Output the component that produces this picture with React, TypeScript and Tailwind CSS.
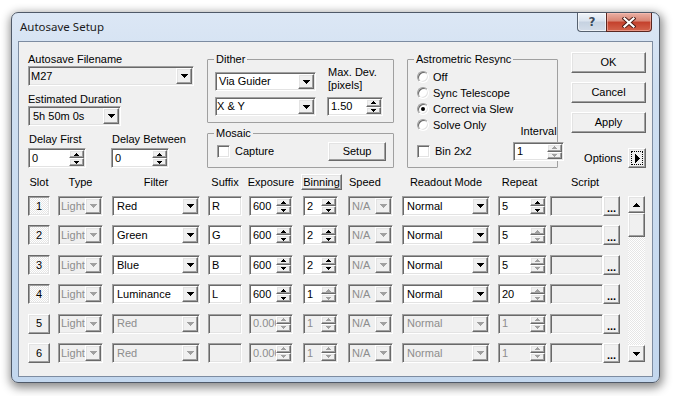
import React from 'react';

// classic win32 bevels
const SUNKEN =
  'border border-t-[#a0a0a0] border-l-[#a0a0a0] border-b-white border-r-white shadow-[inset_1px_1px_0_#696969,inset_-1px_-1px_0_#e3e3e3] p-[1px]';
const RAISED =
  'border border-t-white border-l-white border-b-[#696969] border-r-[#696969] shadow-[inset_-1px_-1px_0_#a0a0a0,inset_1px_1px_0_#e3e3e3] bg-[#f0f0f0]';
const PRESSED =
  'border border-t-[#696969] border-l-[#696969] border-b-white border-r-white shadow-[inset_1px_1px_0_#a0a0a0,inset_-1px_-1px_0_#e3e3e3] bg-[image:repeating-conic-gradient(#ffffff_0%_25%,#e6e6e6_0%_50%)] bg-[length:2px_2px]';
const GRAY_TEXT = 'text-[#8d8d8d]';
const GROUP = 'border border-[#a0a0a0] rounded-[1px] min-w-0 shrink-0';

const DownTri = ({ gray = false }: { gray?: boolean }) => (
  <svg width="7" height="4" shapeRendering="crispEdges">
    <polygon points="0,0 7,0 4,4 3,4" fill={gray ? '#a0a0a0' : '#000'} />
  </svg>
);

const SmallTri = ({ up = false, gray = false }: { up?: boolean; gray?: boolean }) => (
  <svg width="5" height="3" shapeRendering="crispEdges">
    <polygon points={up ? '0,3 5,3 3,0 2,0' : '0,0 5,0 3,3 2,3'} fill={gray ? '#a0a0a0' : '#000'} />
  </svg>
);

type FieldProps = { w: string; text?: string; disabled?: boolean; grayBg?: boolean; pl?: string; h?: string };

const Combo = ({ w, text, disabled = false, grayBg = false, pl = 'pl-[2px]', h = 'h-[20px]' }: FieldProps) => (
  <div className={`${SUNKEN} ${w} ${h} ${disabled || grayBg ? 'bg-[#f0f0f0]' : 'bg-white'} flex shrink-0`}>
    <div className={`flex-1 min-w-0 flex items-center overflow-hidden whitespace-nowrap ${pl} ${disabled ? GRAY_TEXT : ''}`}>
      {text}
    </div>
    <div className={`${RAISED} w-[16px] shrink-0 flex items-center justify-center`}>
      <DownTri gray={disabled} />
    </div>
  </div>
);

const Spin = ({ w, text, disabled = false, dim = false, pl = 'pl-[1px]', h = 'h-[20px]' }: FieldProps & { dim?: boolean }) => (
  <div className={`${SUNKEN} ${w} ${h} ${disabled ? 'bg-[#f0f0f0]' : 'bg-white'} flex shrink-0`}>
    <div className={`flex-1 min-w-0 flex items-center overflow-hidden whitespace-nowrap ${pl} ${disabled ? GRAY_TEXT : ''}`}>
      {text}
    </div>
    <div className="w-[15px] shrink-0 flex flex-col">
      <div className={`${RAISED} flex-1 flex items-center justify-center`}>
        <SmallTri up gray={dim || disabled} />
      </div>
      <div className={`${RAISED} flex-1 flex items-center justify-center`}>
        <SmallTri gray={dim || disabled} />
      </div>
    </div>
  </div>
);

const Edit = ({ w, text, disabled = false, pl = 'pl-[2px]' }: FieldProps) => (
  <div className={`${SUNKEN} ${w} h-[20px] ${disabled ? 'bg-[#f0f0f0]' : 'bg-white'} flex items-center shrink-0 ${pl}`}>
    {text}
  </div>
);

const Check = () => <div className={`${SUNKEN} w-[13px] h-[13px] bg-white shrink-0`} />;

const Radio = ({ checked = false }: { checked?: boolean }) => (
  <div className="w-[12px] h-[12px] rounded-full border border-t-[#a0a0a0] border-l-[#a0a0a0] border-b-white border-r-white shadow-[inset_1px_1px_0_#696969,inset_-1px_-1px_0_#e3e3e3] bg-white flex items-center justify-center shrink-0">
    {checked && <div className="w-[4px] h-[4px] rounded-full bg-black" />}
  </div>
);

const Button = ({ w, h = 'h-[21px]', children }: { w: string; h?: string; children: React.ReactNode }) => (
  <div className={`${RAISED} ${w} ${h} flex items-center justify-center shrink-0`}>{children}</div>
);

const rows = [
  { slot: '1', on: true, filter: 'Red', suffix: 'R', exp: '600', bin: '2', binDim: false, repeat: '5', repDim: false },
  { slot: '2', on: true, filter: 'Green', suffix: 'G', exp: '600', bin: '2', binDim: false, repeat: '5', repDim: true },
  { slot: '3', on: true, filter: 'Blue', suffix: 'B', exp: '600', bin: '2', binDim: false, repeat: '5', repDim: true },
  { slot: '4', on: true, filter: 'Luminance', suffix: 'L', exp: '600', bin: '1', binDim: true, repeat: '20', repDim: true },
  { slot: '5', on: false, filter: 'Red', suffix: '', exp: '0.000', bin: '1', binDim: true, repeat: '1', repDim: true },
  { slot: '6', on: false, filter: 'Red', suffix: '', exp: '0.000', bin: '1', binDim: true, repeat: '1', repDim: true },
];

export default function App() {
  return (
    <div className="w-[675px] h-[396px] bg-white pl-[11px] pt-[12px] overflow-hidden font-['Liberation_Sans',Arial,sans-serif] text-[11px] text-black">
      {/* window frame */}
      <div className="w-[649px] h-[371px] rounded-[7px] border border-[#4f5968] bg-[linear-gradient(#dce7f5,#cfdff1_20%,#c3d7ee)] shadow-[1px_3px_10px_2px_rgba(0,0,0,0.45)] flex flex-col px-[6px] pb-[5px]">
        {/* title bar */}
        <div className="h-[28px] flex items-start shrink-0">
          <div className="pl-[2px] pt-[6px] leading-[16px] text-[11.5px] text-[#1b1b1b] font-['Noto_Sans',sans-serif]">
            Autosave Setup
          </div>
          <div className="ml-auto mr-[1px] flex">
            <div className="w-[29px] h-[19px] border border-t-0 border-r-0 border-[#56616f] rounded-bl-[4px] bg-[linear-gradient(#f0f4f9,#dae3ee_45%,#c6d2e1_50%,#d3dde9)] flex items-center justify-center shadow-[inset_0_0_0_1px_rgba(255,255,255,0.6)]">
              <span className="font-['DejaVu_Sans',sans-serif] font-bold text-[12px] leading-none text-[#3a4a5c] [text-shadow:0_0_1px_#fff]">?</span>
            </div>
            <div className="w-[46px] h-[19px] border border-t-0 border-[#5a2620] rounded-br-[4px] bg-[linear-gradient(#eab0a4,#d88473_45%,#c4402c_50%,#d3644c)] flex items-center justify-center shadow-[inset_0_0_0_1px_rgba(255,200,190,0.5)]">
              <svg width="14" height="11" viewBox="0 0 14 11">
                <path d="M2.5 1.5 L11.5 9.5 M11.5 1.5 L2.5 9.5" stroke="#4a1a14" strokeWidth="4" strokeLinecap="square" />
                <path d="M2.5 1.5 L11.5 9.5 M11.5 1.5 L2.5 9.5" stroke="#ffffff" strokeWidth="2.2" strokeLinecap="square" />
              </svg>
            </div>
          </div>
        </div>

        {/* client area */}
        <div className="flex-1 border border-[#7d8ca1] bg-[#f0f0f0] pl-[9px] pt-[10px] flex flex-col">
          {/* top section */}
          <div className="flex items-start">
            {/* left column */}
            <div className="w-[179px] mt-[1px] flex flex-col shrink-0">
              <div className="leading-[13px]">Autosave Filename</div>
              <Combo w="w-[166px]" text="M27" grayBg pl="pl-[1px]" />
              <div className="leading-[13px] mt-[7px]">Estimated Duration</div>
              <Combo w="w-[93px]" text="5h 50m 0s" grayBg pl="pl-[3px]" />
              <div className="flex mt-[7px]">
                <div className="w-[83px] flex flex-col">
                  <div className="leading-[13px] pl-[1px]">Delay First</div>
                  <Spin w="w-[58px]" text="0" pl="pl-[2px]" h="h-[20px] mt-[2px]" />
                </div>
                <div className="flex flex-col">
                  <div className="leading-[13px] pl-[1px]">Delay Between</div>
                  <Spin w="w-[58px]" text="0" pl="pl-[2px]" h="h-[20px] mt-[2px]" />
                </div>
              </div>
            </div>

            {/* dither / mosaic */}
            <div className="w-[187px] mt-[1px] flex flex-col shrink-0">
              <fieldset className={`${GROUP} h-[70px]`}>
                <legend className="ml-[6px] px-[2px] leading-[13px]">Dither</legend>
                <div className="flex pl-[7px] pt-[6px]">
                  <div className="flex flex-col gap-[6px]">
                    <Combo w="w-[101px]" h="h-[19px]" text="Via Guider" pl="pl-[2px]" />
                    <Combo w="w-[101px]" h="h-[19px]" text="X & Y" pl="pl-0" />
                  </div>
                  <div className="ml-[11px] flex flex-col -mt-[6px]">
                    <div className="leading-[13px] pl-[1px]">Max. Dev.</div>
                    <div className="leading-[13px] pl-[1px]">[pixels]</div>
                    <Spin w="w-[56px]" h="h-[19px] mt-[5px]" text="1.50" pl="pl-[2px]" />
                  </div>
                </div>
              </fieldset>
              <fieldset className={`${GROUP} h-[41px] mt-[4px]`}>
                <legend className="ml-[6px] px-[2px] leading-[13px]">Mosaic</legend>
                <div className="flex items-center pl-[9px] pr-[7px] pt-[2px]">
                  <Check />
                  <span className="ml-[5px]">Capture</span>
                  <div className="ml-auto">
                    <Button w="w-[58px]" h="h-[19px]">Setup</Button>
                  </div>
                </div>
              </fieldset>
            </div>

            {/* astrometric resync */}
            <fieldset className={`${GROUP} ml-[13px] mt-[1px] w-[151px] h-[115px]`}>
              <legend className="ml-[6px] px-[2px] leading-[13px]">Astrometric Resync</legend>
              <div className="flex items-end justify-between pl-[9px] pr-[9px] pt-[3px]">
                <div className="flex flex-col">
                  {['Off', 'Sync Telescope', 'Correct via Slew', 'Solve Only'].map((t) => (
                    <div key={t} className="h-[16px] flex items-center gap-[4px] whitespace-nowrap">
                      <Radio checked={t === 'Correct via Slew'} />
                      <span>{t}</span>
                    </div>
                  ))}
                  <div className="h-[19px] mt-[9px] flex items-center gap-[5px]">
                    <Check />
                    <span>Bin 2x2</span>
                  </div>
                </div>
                <div className="flex flex-col items-center w-[51px]">
                  <div className="leading-[13px] mb-[4px]">Interval</div>
                  <Spin w="w-[51px]" h="h-[19px]" text="1" dim pl="pl-[2px]" />
                </div>
              </div>
            </fieldset>

            {/* buttons */}
            <div className="ml-[13px] w-[75px] flex flex-col gap-[9px] shrink-0">
              <Button w="w-[75px]">OK</Button>
              <Button w="w-[75px]">Cancel</Button>
              <Button w="w-[75px]">Apply</Button>
              <div className="mt-[6px] flex items-center justify-end gap-[6px]">
                <span className="leading-[13px]">Options</span>
                <div className={`${RAISED} w-[18px] h-[20px] p-[2px] shrink-0`}>
                  <div className="w-full h-full border border-dotted border-black flex items-center justify-center">
                    <svg width="5" height="9" shapeRendering="crispEdges">
                      <polygon points="0,0 5,4.5 0,9" fill="#000" />
                    </svg>
                  </div>
                </div>
              </div>
            </div>
          </div>

          {/* table header */}
          <div className="flex items-center h-[16px] mt-[6px] whitespace-nowrap">
            <div className="w-[22px] flex justify-center shrink-0">Slot</div>
            <div className="ml-[8px] w-[45px] flex justify-center shrink-0">Type</div>
            <div className="ml-[9px] w-[88px] flex justify-center shrink-0">Filter</div>
            <div className="ml-[8px] w-[34px] flex justify-center shrink-0">Suffix</div>
            <div className="ml-[7px] w-[44px] flex justify-center shrink-0">Exposure</div>
            <div className={`${RAISED} ml-[8px] w-[41px] h-[16px] flex items-center justify-center shrink-0`}>Binning</div>
            <div className="ml-[6px] w-[46px] pl-[1px] shrink-0">Speed</div>
            <div className="ml-[8px] w-[88px] flex justify-center shrink-0">Readout Mode</div>
            <div className="ml-[8px] w-[49px] flex justify-center pr-[6px] shrink-0">Repeat</div>
            <div className="ml-[3px] w-[70px] flex justify-center shrink-0">Script</div>
          </div>

          {/* rows + scrollbar */}
          <div className="flex mt-[6px]">
            <div className="flex flex-col gap-[9.4px]">
              {rows.map((r) => (
                <div key={r.slot} className="flex h-[20px]">
                  <div className={`${r.on ? PRESSED : RAISED} w-[22px] h-[20px] flex items-center justify-center shrink-0`}>
                    {r.slot}
                  </div>
                  <div className="ml-[8px]">
                    <Combo w="w-[45px]" text="Light" disabled pl="pl-[1px]" />
                  </div>
                  <div className="ml-[9px]">
                    <Combo w="w-[88px]" text={r.filter} disabled={!r.on} pl="pl-[3px]" />
                  </div>
                  <div className="ml-[8px]">
                    <Edit w="w-[34px]" text={r.suffix} disabled={!r.on} pl="pl-[3px]" />
                  </div>
                  <div className="ml-[7px]">
                    <Spin w="w-[44px]" text={r.exp} disabled={!r.on} pl="pl-[2px]" />
                  </div>
                  <div className="ml-[10px]">
                    <Spin w="w-[35px]" text={r.bin} disabled={!r.on} dim={r.binDim} pl="pl-[2px]" />
                  </div>
                  <div className="ml-[10px]">
                    <Combo w="w-[45px]" text="N/A" disabled pl="pl-[2px]" />
                  </div>
                  <div className="ml-[9px]">
                    <Combo w="w-[88px]" text="Normal" disabled={!r.on} pl="pl-[3px]" />
                  </div>
                  <div className="ml-[8px]">
                    <Spin w="w-[49px]" text={r.repeat} disabled={!r.on} dim={r.repDim} pl="pl-[2px]" />
                  </div>
                  <div className="ml-[3px] flex">
                    <Edit w="w-[53px]" disabled />
                    <div className={`${RAISED} w-[17px] h-[20px] flex items-end justify-center pb-[3px] font-bold leading-[8px] shrink-0`}>
                      ...
                    </div>
                  </div>
                </div>
              ))}
            </div>
            {/* scrollbar */}
            <div className="ml-[8px] w-[17px] h-[166px] flex flex-col shrink-0 bg-[image:repeating-conic-gradient(#ffffff_0%_25%,#e6e6e6_0%_50%)] bg-[length:2px_2px]">
              <div className={`${RAISED} h-[17px] flex items-center justify-center shrink-0`}>
                <svg width="7" height="4" shapeRendering="crispEdges">
                  <polygon points="0,4 7,4 4,0 3,0" fill="#000" />
                </svg>
              </div>
              <div className={`${RAISED} h-[24px] shrink-0`} />
              <div className="flex-1" />
              <div className={`${RAISED} h-[17px] flex items-center justify-center shrink-0`}>
                <DownTri />
              </div>
            </div>
          </div>
        </div>
      </div>
    </div>
  );
}
